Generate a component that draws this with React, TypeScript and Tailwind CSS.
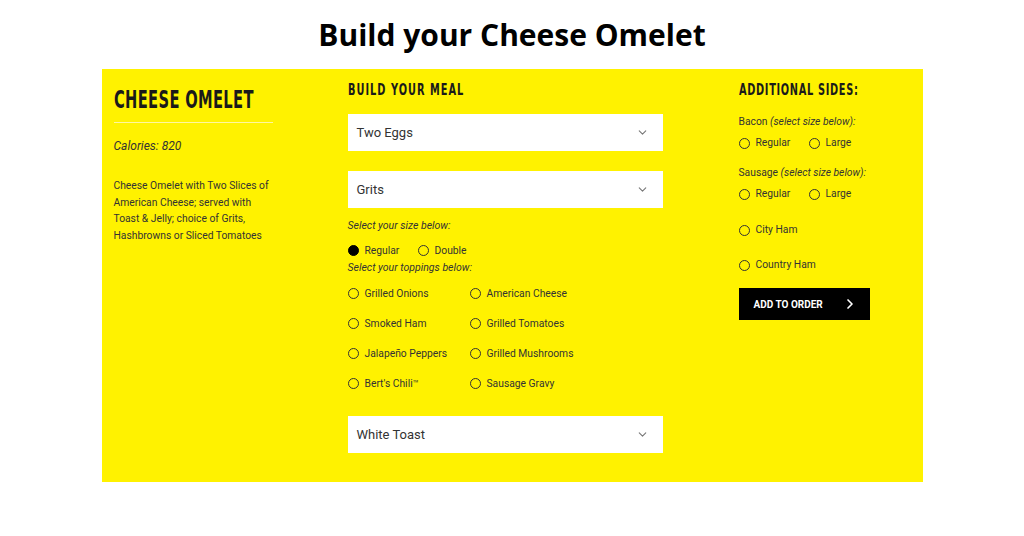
import { ChevronDown, ChevronRight } from "lucide-react";

const TOPPINGS = [
  ["Grilled Onions", "American Cheese"],
  ["Smoked Ham", "Grilled Tomatoes"],
  ["Jalapeño Peppers", "Grilled Mushrooms"],
  ["Bert's Chili™", "Sausage Gravy"],
];

function Radio({ label, checked = false, className = "" }: { label: string; checked?: boolean; className?: string }) {
  return (
    <label className={`flex items-center gap-[6px] text-[10.3px] text-[#333] ${className}`}>
      <span
        className={`inline-block h-[11px] w-[11px] shrink-0 rounded-full border-[1.5px] border-[#333] ${checked ? "bg-black border-black" : ""}`}
      />
      <span>{label}</span>
    </label>
  );
}

function Select({ value }: { value: string }) {
  return (
    <div className="flex h-[37px] w-[315px] items-center justify-between bg-white pl-[9px] pr-[14px]">
      <span className="text-[13px] text-[#333]">{value}</span>
      <ChevronDown size={13} strokeWidth={2} className="text-[#777]" />
    </div>
  );
}

// condensed display face: squeeze DejaVu to an Oswald-like width
function Heading({ children, className = "" }: { children: React.ReactNode; className?: string }) {
  return (
    <h2
      className={`origin-left scale-x-[0.68] whitespace-nowrap font-bold uppercase text-[#1a1a1a] [font-family:'DejaVu_Sans_Condensed','DejaVu_Sans',sans-serif] ${className}`}
    >
      {children}
    </h2>
  );
}

export default function App() {
  return (
    <div className="min-h-[536px] w-full bg-white [font-family:Roboto,'Liberation_Sans',sans-serif]">
      <h1 className="pt-[16px] text-center text-[30px] font-bold leading-[38px] text-black [font-family:'Open_Sans',sans-serif]">
        Build your Cheese Omelet
      </h1>

      <div className="mx-auto mt-[15px] flex h-[413px] w-[821px] bg-[#fff200] pl-[12px]">
        {/* left: product info */}
        <div className="w-[160px] pt-[19px]">
          <Heading className="text-[24px] leading-[24px] tracking-[0.5px]">Cheese Omelet</Heading>
          <div className="mt-[10px] h-px w-[159px] bg-[#fff7a0]" />
          <p className="mt-[14px] text-[12px] italic text-[#333]">Calories: 820</p>
          <p className="mt-[23px] w-[160px] text-[10.3px] leading-[16.7px] text-[#333]">
            Cheese Omelet with Two Slices of American Cheese; served with Toast &amp; Jelly; choice of Grits,
            Hashbrowns or Sliced Tomatoes
          </p>
        </div>

        {/* middle: build your meal */}
        <div className="ml-[74px] w-[315px] pt-[13px]">
          <Heading className="text-[16px] leading-[16px] tracking-[1.5px]">Build your meal</Heading>
          <div className="mt-[16px]">
            <Select value="Two Eggs" />
          </div>
          <div className="mt-[20px]">
            <Select value="Grits" />
          </div>
          <p className="mt-[12px] text-[10.5px] italic leading-[12px] text-[#333]">Select your size below:</p>
          <div className="mt-[11px] flex items-center">
            <Radio label="Regular" checked className="w-[70px]" />
            <Radio label="Double" />
          </div>
          <p className="mt-[4px] text-[10.5px] italic leading-[12px] text-[#333]">Select your toppings below:</p>
          <div className="mt-[13px] flex flex-col gap-[18px]">
            {TOPPINGS.map(([a, b]) => (
              <div key={a} className="flex h-[12px] items-center">
                <Radio label={a} className="w-[122px]" />
                <Radio label={b} />
              </div>
            ))}
          </div>
          <div className="mt-[27px]">
            <Select value="White Toast" />
          </div>
        </div>

        {/* right: additional sides */}
        <div className="ml-[76px] pt-[13px]">
          <Heading className="text-[16px] leading-[16px] tracking-[1px]">Additional sides:</Heading>
          <p className="mt-[18px] text-[10.3px] leading-[12px] text-[#333]">
            Bacon <span className="italic">(select size below):</span>
          </p>
          <div className="mt-[9px] flex h-[12px] items-center">
            <Radio label="Regular" className="w-[70px]" />
            <Radio label="Large" />
          </div>
          <p className="mt-[18px] text-[10.3px] leading-[12px] text-[#333]">
            Sausage <span className="italic">(select size below):</span>
          </p>
          <div className="mt-[9px] flex h-[12px] items-center">
            <Radio label="Regular" className="w-[70px]" />
            <Radio label="Large" />
          </div>
          <div className="mt-[24px] flex h-[12px] items-center">
            <Radio label="City Ham" />
          </div>
          <div className="mt-[23px] flex h-[12px] items-center">
            <Radio label="Country Ham" />
          </div>
          <button className="mt-[17px] flex h-[32px] w-[131px] items-center justify-between bg-black pl-[15px] pr-[12px] text-[10px] font-bold uppercase text-white">
            Add to order
            <ChevronRight size={16} strokeWidth={2.5} />
          </button>
        </div>
      </div>
    </div>
  );
}
